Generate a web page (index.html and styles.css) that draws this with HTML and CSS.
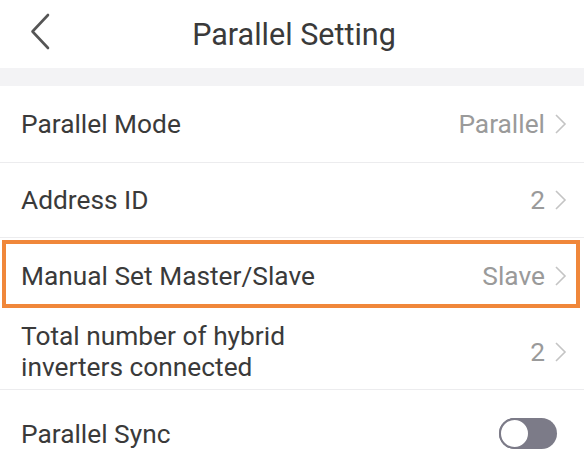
FILE: index.html
```html
<!DOCTYPE html>
<html>
<head>
<meta charset="utf-8">
<link rel="stylesheet" href="styles.css">
</head>
<body>
<div class="screen">
  <header class="topbar">
    <svg class="back" width="22" height="37" viewBox="0 0 22 37"><path d="M19 2 L3.5 18.5 L19 35" fill="none" stroke="#555" stroke-width="2.6" stroke-linecap="round" stroke-linejoin="round"/></svg>
    <h1 class="title">Parallel Setting</h1>
  </header>
  <div class="band"></div>
  <div class="list">
    <div class="row row-1">
      <span class="label">Parallel Mode</span>
      <span class="value">Parallel<svg class="chev" width="13" height="22" viewBox="0 0 13 22"><path d="M2 2 L11 11 L2 20" fill="none" stroke="#c4c4c4" stroke-width="1.6"/></svg></span>
    </div>
    <div class="row row-2">
      <span class="label">Address ID</span>
      <span class="value">2<svg class="chev" width="13" height="22" viewBox="0 0 13 22"><path d="M2 2 L11 11 L2 20" fill="none" stroke="#c4c4c4" stroke-width="1.6"/></svg></span>
    </div>
    <div class="row row-3 highlight">
      <span class="label">Manual Set Master/Slave</span>
      <span class="value">Slave<svg class="chev" width="13" height="22" viewBox="0 0 13 22"><path d="M2 2 L11 11 L2 20" fill="none" stroke="#c4c4c4" stroke-width="1.6"/></svg></span>
    </div>
    <div class="row row-4">
      <span class="label">Total number of hybrid<br>inverters connected</span>
      <span class="value">2<svg class="chev" width="13" height="22" viewBox="0 0 13 22"><path d="M2 2 L11 11 L2 20" fill="none" stroke="#c4c4c4" stroke-width="1.6"/></svg></span>
    </div>
    <div class="row row-5">
      <span class="label">Parallel Sync</span>
      <span class="toggle"><span class="knob"></span></span>
    </div>
  </div>
</div>
</body>
</html>
```
FILE: styles.css
```css
* { box-sizing: border-box; }
html, body { margin: 0; padding: 0; background: #fff; }
body { font-family: Roboto, "Noto Sans", sans-serif; color: #333; }
.screen { width: 584px; height: 464px; overflow: hidden; background: #fff; }
.topbar { height: 68px; display: flex; align-items: center; position: relative; }
.back { position: absolute; left: 29px; top: 13px; }
.title { margin: 0; flex: 1; text-align: center; font-weight: 400; font-size: 30.5px; color: #3a3a3a; padding-left: 4px; }
.band { height: 18px; background: #f3f3f5; }
.list { display: flex; flex-direction: column; }
.row { display: flex; align-items: center; justify-content: space-between; padding: 0 17px 0 21px; border-bottom: 1px solid #ececee; }
.label { font-size: 26.3px; color: #3a3a3a; line-height: 31px; }
.value { font-size: 26.3px; color: #9a9a9a; display: flex; align-items: center; gap: 9px; }
.chev { display: block; }
.row-1 { height: 77px; }
.row-2 { height: 75px; }
.row-3 { height: 68px; }
.highlight { margin: 2px 4px 0 2px; border: 4px solid #f0873a; padding: 4px 9px 0 15px; }
.row-4 { height: 82px; padding-top: 7px; }
.row-5 { height: 88px; border-bottom: none; padding-right: 27px; }
.toggle { width: 58px; height: 31px; border-radius: 16px; background: #7c7b88; position: relative; display: block; margin-top: -1px; }
.knob { position: absolute; left: 0; top: 0; width: 31px; height: 31px; border-radius: 50%; background: #fff; border: 2px solid #7c7b88; }
```
